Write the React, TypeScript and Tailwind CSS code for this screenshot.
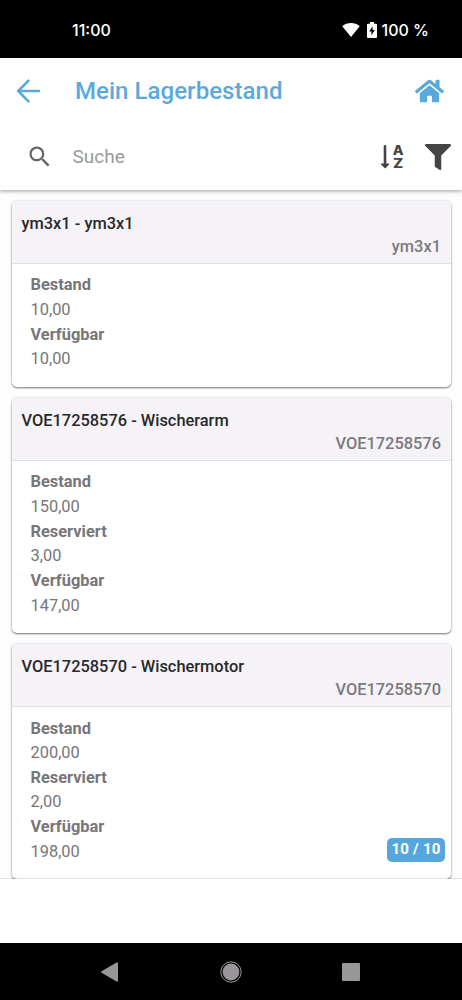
import { FaFilter, FaHome } from "react-icons/fa";
import { MdSearch } from "react-icons/md";

type Field = { label: string; value: string };
type StockItem = { code: string; title: string; fields: Field[] };

const ITEMS: StockItem[] = [
  {
    code: "ym3x1",
    title: "ym3x1",
    fields: [
      { label: "Bestand", value: "10,00" },
      { label: "Verfügbar", value: "10,00" },
    ],
  },
  {
    code: "VOE17258576",
    title: "Wischerarm",
    fields: [
      { label: "Bestand", value: "150,00" },
      { label: "Reserviert", value: "3,00" },
      { label: "Verfügbar", value: "147,00" },
    ],
  },
  {
    code: "VOE17258570",
    title: "Wischermotor",
    fields: [
      { label: "Bestand", value: "200,00" },
      { label: "Reserviert", value: "2,00" },
      { label: "Verfügbar", value: "198,00" },
    ],
  },
];

export default function App() {
  return (
    <div className="flex h-[1000px] w-[462px] flex-col overflow-hidden bg-white font-['Roboto',sans-serif]">
      <StatusBar />
      <header className="z-10 h-[132px] shrink-0 bg-white shadow-[0_1px_4px_rgba(0,0,0,0.4)]">
        <div className="flex h-[66px] items-center pr-[18px] pl-4">
          <button aria-label="Zurück">
            <BackArrow />
          </button>
          <h1 className="ml-[34px] flex-1 text-[24px] leading-none font-medium tracking-[0.05px] text-[#5aa9dd]">
            Mein Lagerbestand
          </h1>
          <FaHome className="h-[26px] w-[29px] text-[#5aa9dd]" />
        </div>
        <div className="flex h-[66px] items-center pr-[11px] pl-[26px]">
          <MdSearch size={27.5} className="text-[#666]" />
          <input
            placeholder="Suche"
            className="ml-[19px] w-0 flex-1 bg-transparent text-[19px] text-[#444] placeholder:text-[#999] focus:outline-none"
          />
          <SortIcon />
          <FaFilter size={26} className="ml-[20px] text-[#444]" />
        </div>
      </header>

      <main className="relative min-h-0 flex-1 overflow-hidden bg-[#fefdfe] pt-[11px] pr-[11px] pl-3">
        <div className="flex flex-col gap-[11px]">
          {ITEMS.map((item) => (
            <StockCard key={item.code} item={item} />
          ))}
        </div>
        <span className="absolute right-[17px] bottom-[17px] flex h-6 w-[58px] items-center justify-center rounded-[5px] bg-[#55a6dc] pb-[1px] text-[15px] font-bold tracking-[0.25px] text-white">
          10 / 10
        </span>
      </main>

      <footer className="z-10 h-[64px] shrink-0 bg-white shadow-[0_-1px_1px_rgba(0,0,0,0.1)]" />
      <NavBar />
    </div>
  );
}

function StockCard({ item }: { item: StockItem }) {
  return (
    <section className="overflow-hidden rounded-[5px] bg-white text-[16.4px] shadow-[0_1px_2px_rgba(0,0,0,0.5),0_0_3px_rgba(0,0,0,0.12)]">
      <div className="h-[63px] border-b border-[#e2e1e4] bg-[#f5f3f7] pt-[11px] pr-[10px] pl-[9.5px] font-medium">
        <div className="leading-[23px] text-[#29282b]">
          {item.code} - {item.title}
        </div>
        <div className="text-right leading-[23px] text-[#7b7a7c]">{item.code}</div>
      </div>
      <dl className="px-[18.5px] pt-[9.4px] pb-[14.9px] leading-[24.65px] text-[#777678]">
        {item.fields.map((f) => (
          <div key={f.label}>
            <dt className="font-bold">{f.label}</dt>
            <dd>{f.value}</dd>
          </div>
        ))}
      </dl>
    </section>
  );
}

function StatusBar() {
  return (
    <div className="flex h-[58px] shrink-0 items-center bg-black pt-[2px] pr-[33px] pl-[72px] font-['Inter',sans-serif] text-[16px] font-medium text-white">
      <span className="flex-1">11:00</span>
      <svg width="18" height="14" viewBox="0 0 18 14" fill="currentColor">
        <path d="M9 14 .3 3.3C2.7 1.1 5.7 0 9 0s6.300 1.100 8.700 3.300z" />
      </svg>
      <svg className="ml-[7px]" width="10" height="16" viewBox="0 0 10 16">
        <path d="M3 0h4v1.700h2q1 0 1 1V15q0 1-1 1H1q-1 0-1-1V2.700q0-1 1-1h2z" fill="white" />
        <path d="M5.600 4.300 2.200 9.600h2.200v3.700L7.800 8H5.600z" fill="black" />
      </svg>
      <span className="ml-[5px]">100 %</span>
    </div>
  );
}

function NavBar() {
  return (
    <nav className="flex h-[57px] shrink-0 items-center justify-between bg-black pr-[102px] pl-[101px] text-[#99969a]">
      <svg width="17" height="20" viewBox="0 0 17 20" fill="currentColor">
        <path d="M15.500.4Q17 0 17 1.200v17.600q0 1.200-1.500.8L.6 10.700q-1-.7 0-1.400z" />
      </svg>
      <svg className="ml-[2px]" width="22" height="22" viewBox="0 0 22 22">
        <circle cx="11" cy="11" r="10.200" fill="none" stroke="currentColor" />
        <circle cx="11" cy="11" r="8.400" fill="currentColor" />
      </svg>
      <svg width="18" height="18" viewBox="0 0 18 18">
        <rect width="18" height="18" rx="1" fill="currentColor" />
      </svg>
    </nav>
  );
}

function BackArrow() {
  return (
    <svg
      className="text-[#5aa9dd]"
      width="25"
      height="24"
      viewBox="0 0 25 24"
      fill="none"
      stroke="currentColor"
      strokeWidth="2.600"
      strokeLinecap="round"
      strokeLinejoin="round"
    >
      <path d="M12.500 1.700 2.200 12l10.300 10.300M2.200 12H23" />
    </svg>
  );
}

function SortIcon() {
  return (
    <svg width="25" height="32" viewBox="0 0 25 32" fill="#444">
      <path d="M3.700 5q0-.9 1.300-.9T6.300 5v17.500h2.300q.9.100.4.900l-3.200 3.600q-.6.600-1.200 0L1 23.400q-.5-.8.400-.9h2.300z" />
      <text
        x="12.800"
        y="14"
        textLength="10.800"
        lengthAdjust="spacingAndGlyphs"
        className="font-['Inter',sans-serif] text-[12.500px] font-extrabold"
      >
        A
      </text>
      <text
        x="13"
        y="27.400"
        textLength="10.200"
        lengthAdjust="spacingAndGlyphs"
        className="font-['Inter',sans-serif] text-[12.500px] font-extrabold"
      >
        Z
      </text>
    </svg>
  );
}
